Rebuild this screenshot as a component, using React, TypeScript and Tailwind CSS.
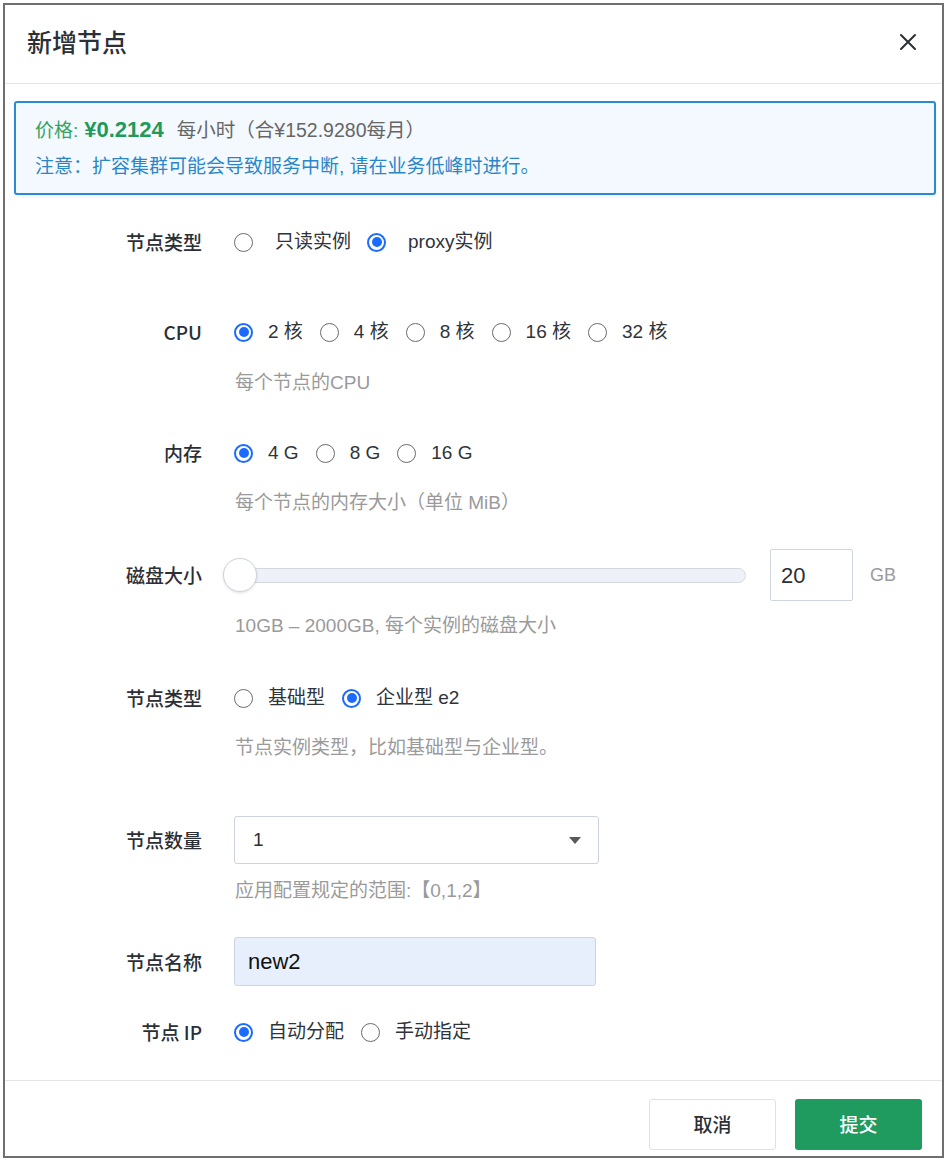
import React from "react";

const base = "font-['Liberation_Sans','Noto_Sans_CJK_SC',sans-serif]";
const cjk = "font-['Noto_Sans_CJK_SC','Liberation_Sans',sans-serif]";

const Radio = ({ checked }: { checked?: boolean }) =>
  checked ? (
    <span className="flex h-[19px] w-[19px] shrink-0 items-center justify-center rounded-full border-2 border-[#1b6bff] bg-white">
      <span className="h-[10px] w-[10px] rounded-full bg-[#1b6bff]" />
    </span>
  ) : (
    <span className="h-[19px] w-[19px] shrink-0 rounded-full border-[1.5px] border-[#6b6b6b] bg-white" />
  );

type Opt = { text: string; checked?: boolean };

const RadioGroup = (props: { options: Opt[]; textGap?: string; itemGap?: string }) => {
  return (
    <div className="flex items-center text-[19px] text-[#2f333a]">
      {props.options.map((o, i) => (
        <div key={o.text} className={"flex items-center " + (i > 0 ? props.itemGap ?? "ml-[17px]" : "")}>
          <Radio checked={o.checked} />
          <span className={(props.textGap ?? "ml-[15px]") + " whitespace-pre leading-[24px]"}>{o.text}</span>
        </div>
      ))}
    </div>
  );
};

const Row = (props: { label: string; children: React.ReactNode; className?: string; h?: string }) => (
  <div className={"flex items-center " + (props.className ?? "") + " " + (props.h ?? "h-[24px]")}>
    <div className={cjk + " w-[197px] shrink-0 text-right text-[19px] font-medium text-[#2b2f36] leading-[24px]"}>
      {props.label}
    </div>
    <div className="ml-[32px] flex flex-1 items-center">{props.children}</div>
  </div>
);

const Help = (props: { children: React.ReactNode; className?: string }) => (
  <div className={"pl-[230px] text-[19px] leading-[20px] text-[#9a9a9a] " + (props.className ?? "")}>
    {props.children}
  </div>
);

export default function App() {
  return (
    <div className={base + " h-[1160px] w-[946px] bg-white pl-[3px] pt-[3px]"}>
      <div className="flex h-[1155px] w-[941px] flex-col border-2 border-[#6f6f6f] bg-white">
        {/* header */}
        <div className="flex h-[79px] shrink-0 items-center justify-between border-b border-[#e4e4e4] pb-[4px] pl-[22px] pr-[25px]">
          <div className={cjk + " text-[25px] font-medium text-[#2b2f36]"}>新增节点</div>
          <svg width="18" height="18" viewBox="0 0 18 18" fill="none" stroke="#2b2f36" strokeWidth="2" strokeLinecap="round">
            <path d="M2 2L16 16M16 2L2 16" />
          </svg>
        </div>

        <div className="flex-1">
          {/* notice */}
          <div className="ml-[9px] mr-[6px] mt-[17px] rounded-[3px] border-2 border-[#2b8bd2] bg-[#f3f9fe] pb-[14px] pl-[19px] pt-[15px] shadow-[0_2px_4px_rgba(0,0,0,0.06)]">
            <div className="flex h-[24px] items-baseline leading-[24px]">
              <span className="text-[19px] text-[#36a364]">价格:</span>
              <span className="ml-[6px] text-[22px] font-bold text-[#1f9a5a]">¥0.2124</span>
              <span className="ml-[13px] text-[19.5px] text-[#666]">每小时（合¥152.9280每月）</span>
            </div>
            <div className="mt-[13px] text-[19px] leading-[24px] text-[#2b86c8]">
              注意：扩容集群可能会导致服务中断, 请在业务低峰时进行。
            </div>
          </div>

          <Row label="节点类型" className="mt-[35px]">
            <RadioGroup
              textGap="ml-[22px]"
              itemGap="ml-[16px]"
              options={[{ text: "只读实例" }, { text: "proxy实例", checked: true }]}
            />
          </Row>

          <Row label="CPU" className="mt-[66px]">
            <RadioGroup
              options={[
                { text: "2 核", checked: true },
                { text: "4 核" },
                { text: "8 核" },
                { text: "16 核" },
                { text: "32 核" },
              ]}
            />
          </Row>
          <Help className="mt-[29px]">每个节点的CPU</Help>

          <Row label="内存" className="mt-[48px]">
            <RadioGroup options={[{ text: "4 G", checked: true }, { text: "8 G" }, { text: "16 G" }]} />
          </Row>
          <Help className="mt-[28px]">每个节点的内存大小（单位 MiB）</Help>

          <Row label="磁盘大小" className="mt-[36px]" h="h-[52px]">
            <div className="relative ml-[6px] h-[15px] w-[506px] rounded-full border border-[#d3d8e0] bg-[#eef1f8]">
              <div className="absolute left-[-18px] top-[-11px] h-[34px] w-[34px] rounded-full border-[1.5px] border-[#cfd4db] bg-white shadow-[0_1px_3px_rgba(0,0,0,0.12)]" />
            </div>
            <div className="ml-[24px] flex h-[52px] w-[83px] items-center rounded-[2px] border border-[#cfd5df] pl-[10px] text-[22px] text-[#2b2f36]">
              20
            </div>
            <span className="ml-[17px] text-[18px] text-[#9a9a9a]">GB</span>
          </Row>
          <Help className="mt-[15px]">10GB – 2000GB, 每个实例的磁盘大小</Help>

          <Row label="节点类型" className="mt-[50px]">
            <RadioGroup options={[{ text: "基础型" }, { text: "企业型 e2", checked: true }]} />
          </Row>
          <Help className="mt-[28px]">节点实例类型，比如基础型与企业型。</Help>

          <Row label="节点数量" className="mt-[58px]" h="h-[48px]">
            <div className="flex h-[48px] w-[365px] items-center justify-between rounded-[3px] border border-[#cdd3dc] pl-[18px] pr-[17px] text-[19px] text-[#2b2f36]">
              <span>1</span>
              <svg width="12" height="7" viewBox="0 0 12 7">
                <path d="M0 0H12L6 7Z" fill="#555a61" />
              </svg>
            </div>
          </Row>
          <Help className="mt-[17px]">应用配置规定的范围:【0,1,2】</Help>

          <Row label="节点名称" className="mt-[36px]" h="h-[49px]">
            <div className="flex h-[49px] w-[362px] items-center rounded-[3px] border border-[#cdd5e0] bg-[#e8effc] pl-[13px] text-[22px] text-[#111]">
              new2
            </div>
          </Row>

          <Row label="节点 IP" className="mt-[34px]">
            <RadioGroup options={[{ text: "自动分配", checked: true }, { text: "手动指定" }]} />
          </Row>
        </div>

        {/* footer */}
        <div className="flex shrink-0 justify-end gap-[19px] border-t border-[#e4e4e4] pb-[6px] pr-[20px] pt-[18px]">
          <button className={cjk + " h-[51px] w-[127px] rounded-[3px] border border-[#dde2e8] bg-white text-[19px] font-medium text-[#2b2f36]"}>
            取消
          </button>
          <button className={cjk + " h-[51px] w-[127px] rounded-[3px] bg-[#1f9b5f] text-[19px] font-medium text-white"}>
            提交
          </button>
        </div>
      </div>
    </div>
  );
}
